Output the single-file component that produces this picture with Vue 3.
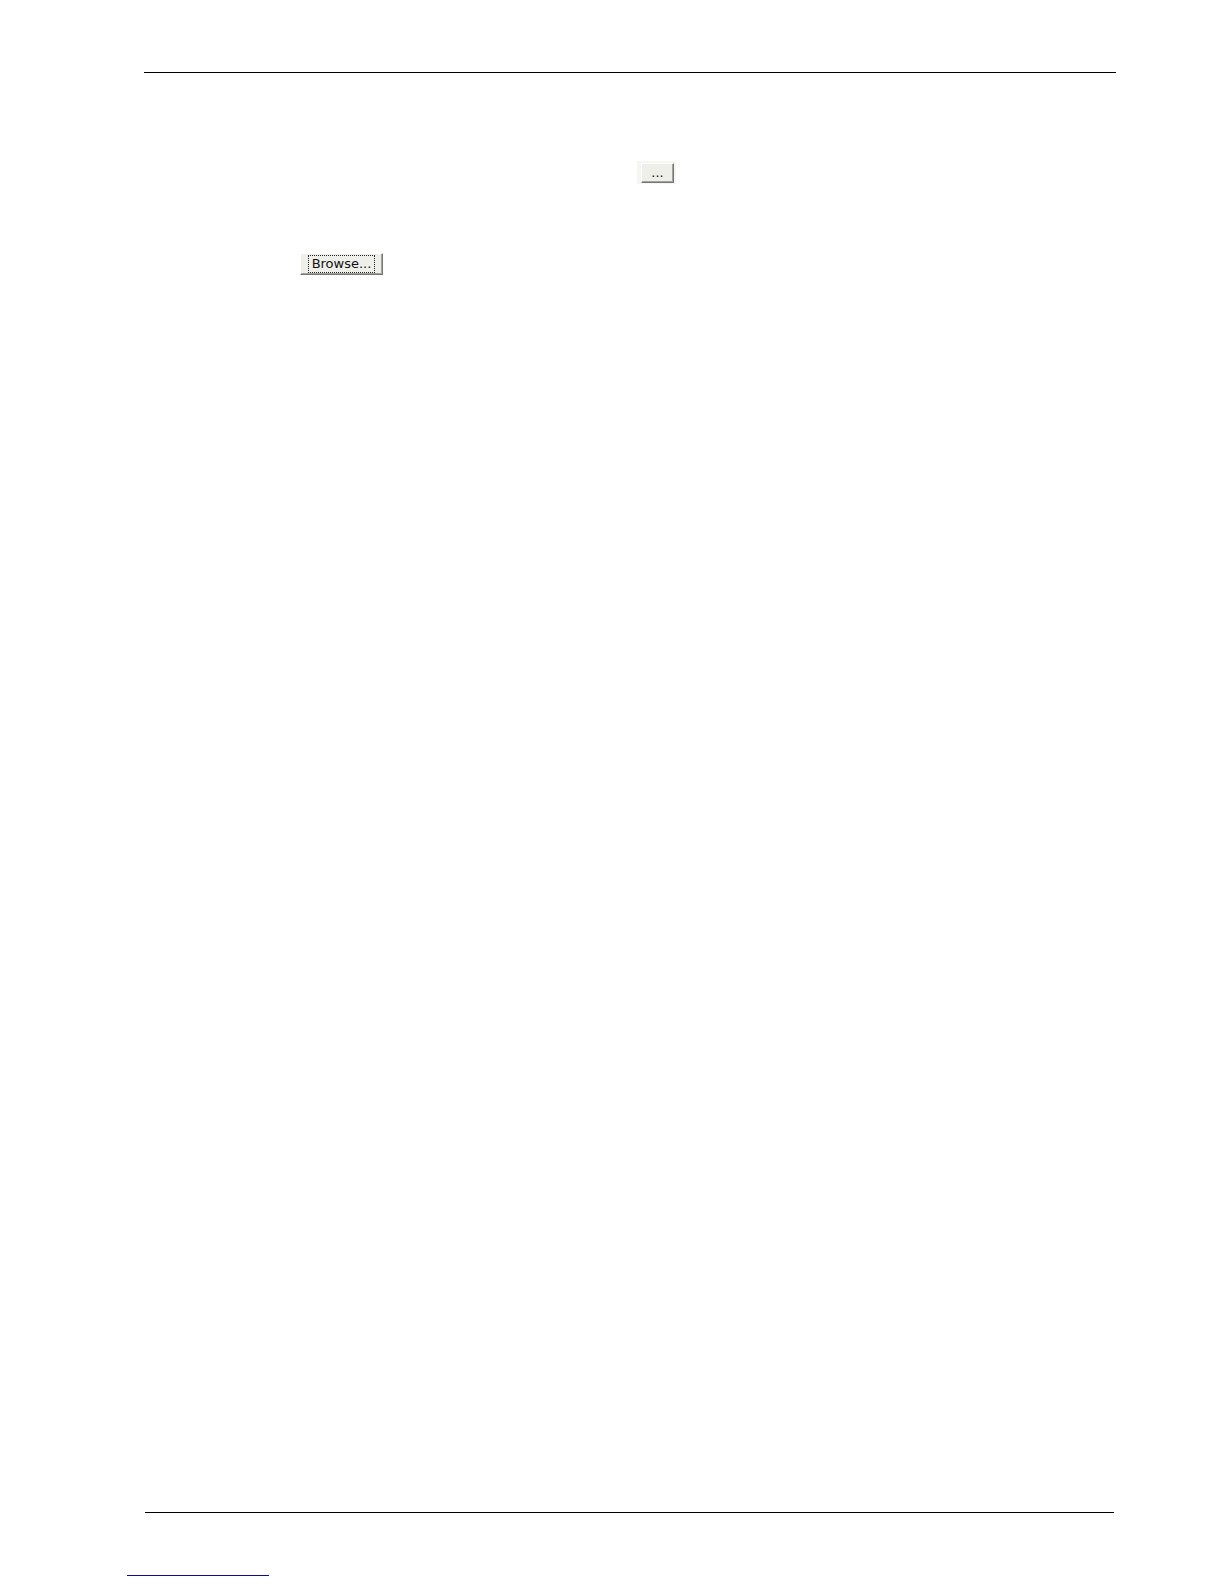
<template>
  <div class="page">
    <hr class="rule header-rule" />
    <main class="content">
      <div class="row picker-row">
        <span class="picker-frame">
          <button type="button" class="btn picker-btn" aria-label="Select">...</button>
        </span>
      </div>
      <div class="row browse-row">
        <button type="button" class="btn browse-btn">
          <span class="focus-ring">Browse...</span>
        </button>
      </div>
    </main>
    <footer class="footer">
      <hr class="rule footer-rule" />
      <hr class="rule link-rule" />
    </footer>
  </div>
</template>

<script setup>
</script>

<style>
body {
  margin: 0;
  background: #fff;
}
</style>

<style scoped>
.page {
  display: flex;
  flex-direction: column;
  box-sizing: border-box;
  min-height: 100vh;
  padding: 72px 108px 8px 127px;
  font-family: "DejaVu Sans", Verdana, sans-serif;
}

.rule {
  height: 1px;
  margin: 0;
  border: none;
  background: #000;
}

.header-rule {
  margin-left: 17px;
}

.content {
  flex: 1;
  padding-top: 88px;
}

.row {
  display: flex;
}

.picker-row {
  padding-left: 510px;
}

.browse-row {
  margin-top: 69px;
  padding-left: 173px;
}

.picker-frame {
  display: flex;
  padding: 2px 2px 1px 4px;
  background: #f5f5f1;
}

.btn {
  margin: 0;
  border: 1px solid;
  border-color: #fff #777 #777 #fff;
  box-shadow: inset -1px -1px #a3a29e;
  background: #efefea;
  color: #111;
  font-family: inherit;
  font-size: 13px;
  line-height: 16px;
}

.picker-btn {
  width: 33px;
  height: 20px;
  padding: 0;
}

.browse-btn {
  display: flex;
  align-items: center;
  justify-content: center;
  width: 83px;
  height: 22px;
  padding: 0;
}

.focus-ring {
  width: 65px;
  border: 1px dotted #222;
}

.footer-rule {
  margin: 0 2px 62px 18px;
}

.link-rule {
  width: 142px;
  background: #0c0c90;
}
</style>
